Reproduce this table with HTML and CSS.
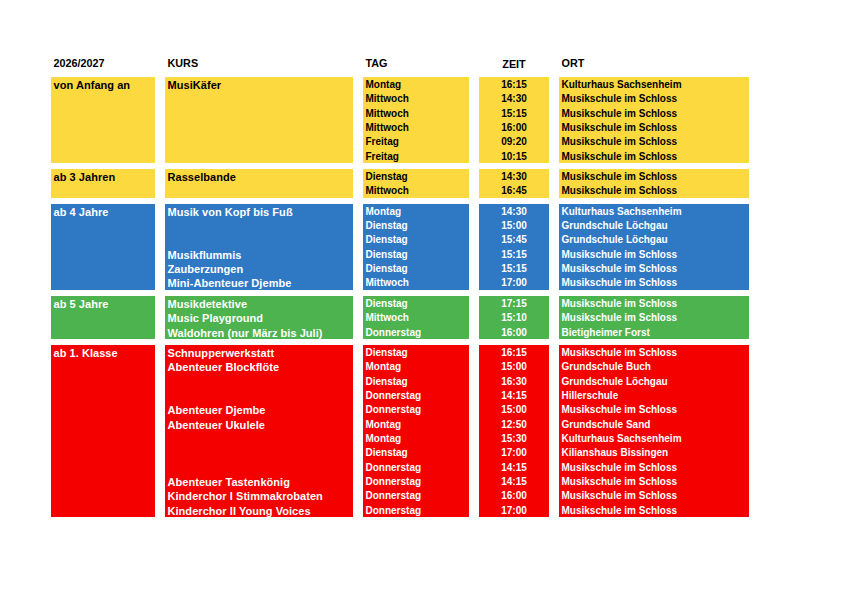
FILE: index.html
```html
<!DOCTYPE html>
<html lang="de">
<head>
<meta charset="utf-8">
<title>Kursplan 2026/2027</title>
<link rel="stylesheet" href="styles.css">
</head>
<body>
<div class="page">
  <div class="head">
    <div class="hc">2026/2027</div>
    <div class="hc">KURS</div>
    <div class="hc">TAG</div>
    <div class="hc center zeit">ZEIT</div>
    <div class="hc">ORT</div>
  </div>

  <div class="group yellow">
    <div class="cell big"><div class="ln">von Anfang an</div></div>
    <div class="cell big"><div class="ln">MusiKäfer</div></div>
    <div class="cell">
      <div class="ln">Montag</div><div class="ln">Mittwoch</div><div class="ln">Mittwoch</div><div class="ln">Mittwoch</div><div class="ln">Freitag</div><div class="ln">Freitag</div>
    </div>
    <div class="cell center">
      <div class="ln">16:15</div><div class="ln">14:30</div><div class="ln">15:15</div><div class="ln">16:00</div><div class="ln">09:20</div><div class="ln">10:15</div>
    </div>
    <div class="cell">
      <div class="ln">Kulturhaus Sachsenheim</div><div class="ln">Musikschule im Schloss</div><div class="ln">Musikschule im Schloss</div><div class="ln">Musikschule im Schloss</div><div class="ln">Musikschule im Schloss</div><div class="ln">Musikschule im Schloss</div>
    </div>
  </div>

  <div class="group yellow">
    <div class="cell big"><div class="ln">ab 3 Jahren</div></div>
    <div class="cell big"><div class="ln">Rasselbande</div></div>
    <div class="cell"><div class="ln">Dienstag</div><div class="ln">Mittwoch</div></div>
    <div class="cell center"><div class="ln">14:30</div><div class="ln">16:45</div></div>
    <div class="cell"><div class="ln">Musikschule im Schloss</div><div class="ln">Musikschule im Schloss</div></div>
  </div>

  <div class="group blue">
    <div class="cell big"><div class="ln">ab 4 Jahre</div></div>
    <div class="cell big">
      <div class="ln">Musik von Kopf bis Fuß</div><div class="ln"></div><div class="ln"></div><div class="ln">Musikflummis</div><div class="ln">Zauberzungen</div><div class="ln">Mini-Abenteuer Djembe</div>
    </div>
    <div class="cell">
      <div class="ln">Montag</div><div class="ln">Dienstag</div><div class="ln">Dienstag</div><div class="ln">Dienstag</div><div class="ln">Dienstag</div><div class="ln">Mittwoch</div>
    </div>
    <div class="cell center">
      <div class="ln">14:30</div><div class="ln">15:00</div><div class="ln">15:45</div><div class="ln">15:15</div><div class="ln">15:15</div><div class="ln">17:00</div>
    </div>
    <div class="cell">
      <div class="ln">Kulturhaus Sachsenheim</div><div class="ln">Grundschule Löchgau</div><div class="ln">Grundschule Löchgau</div><div class="ln">Musikschule im Schloss</div><div class="ln">Musikschule im Schloss</div><div class="ln">Musikschule im Schloss</div>
    </div>
  </div>

  <div class="group green">
    <div class="cell big"><div class="ln">ab 5 Jahre</div></div>
    <div class="cell big">
      <div class="ln">Musikdetektive</div><div class="ln">Music Playground</div><div class="ln">Waldohren (nur März bis Juli)</div>
    </div>
    <div class="cell"><div class="ln">Dienstag</div><div class="ln">Mittwoch</div><div class="ln">Donnerstag</div></div>
    <div class="cell center"><div class="ln">17:15</div><div class="ln">15:10</div><div class="ln">16:00</div></div>
    <div class="cell"><div class="ln">Musikschule im Schloss</div><div class="ln">Musikschule im Schloss</div><div class="ln">Bietigheimer Forst</div></div>
  </div>

  <div class="group red">
    <div class="cell big"><div class="ln">ab 1. Klasse</div></div>
    <div class="cell big">
      <div class="ln">Schnupperwerkstatt</div><div class="ln">Abenteuer Blockflöte</div><div class="ln"></div><div class="ln"></div><div class="ln">Abenteuer Djembe</div><div class="ln">Abenteuer Ukulele</div><div class="ln"></div><div class="ln"></div><div class="ln"></div><div class="ln">Abenteuer Tastenkönig</div><div class="ln">Kinderchor I Stimmakrobaten</div><div class="ln">Kinderchor II Young Voices</div>
    </div>
    <div class="cell">
      <div class="ln">Dienstag</div><div class="ln">Montag</div><div class="ln">Dienstag</div><div class="ln">Donnerstag</div><div class="ln">Donnerstag</div><div class="ln">Montag</div><div class="ln">Montag</div><div class="ln">Dienstag</div><div class="ln">Donnerstag</div><div class="ln">Donnerstag</div><div class="ln">Donnerstag</div><div class="ln">Donnerstag</div>
    </div>
    <div class="cell center">
      <div class="ln">16:15</div><div class="ln">15:00</div><div class="ln">16:30</div><div class="ln">14:15</div><div class="ln">15:00</div><div class="ln">12:50</div><div class="ln">15:30</div><div class="ln">17:00</div><div class="ln">14:15</div><div class="ln">14:15</div><div class="ln">16:00</div><div class="ln">17:00</div>
    </div>
    <div class="cell">
      <div class="ln">Musikschule im Schloss</div><div class="ln">Grundschule Buch</div><div class="ln">Grundschule Löchgau</div><div class="ln">Hillerschule</div><div class="ln">Musikschule im Schloss</div><div class="ln">Grundschule Sand</div><div class="ln">Kulturhaus Sachsenheim</div><div class="ln">Kilianshaus Bissingen</div><div class="ln">Musikschule im Schloss</div><div class="ln">Musikschule im Schloss</div><div class="ln">Musikschule im Schloss</div><div class="ln">Musikschule im Schloss</div>
    </div>
  </div>
</div>
</body>
</html>
```

FILE: styles.css
```css
html, body {
  margin: 0;
  padding: 0;
  background: #ffffff;
}

body {
  font-family: "Liberation Sans", Arial, Helvetica, sans-serif;
  font-weight: bold;
  color: #000000;
}

.page {
  padding: 56px 0 0 51px;
}

.head,
.group {
  display: grid;
  grid-template-columns: 104px 188px 106px 70px 190px;
  column-gap: 10px;
}

.head {
  font-size: 10.8px;
  line-height: 15.5px;
  height: 15px;
}

.hc {
  padding-left: 2.5px;
  white-space: nowrap;
}

.hc.center {
  padding-left: 0;
  text-align: center;
}

.hc.zeit {
  line-height: 17.5px;
}

.group {
  margin-top: 6px;
  font-size: 10px;
}

.cell {
  padding-left: 2.5px;
}

.cell.big {
  font-size: 11px;
  letter-spacing: 0.05px;
}

.cell.center {
  padding-left: 0;
  text-align: center;
}

.ln {
  height: 14.35px;
  line-height: 16.1px;
  white-space: nowrap;
}

.yellow .cell {
  background: #fdd940;
  color: #000000;
}

.blue .cell {
  background: #2e78c4;
  color: #ffffff;
}

.green .cell {
  background: #4cb34f;
  color: #ffffff;
}

.red .cell {
  background: #f40000;
  color: #ffffff;
}
```
